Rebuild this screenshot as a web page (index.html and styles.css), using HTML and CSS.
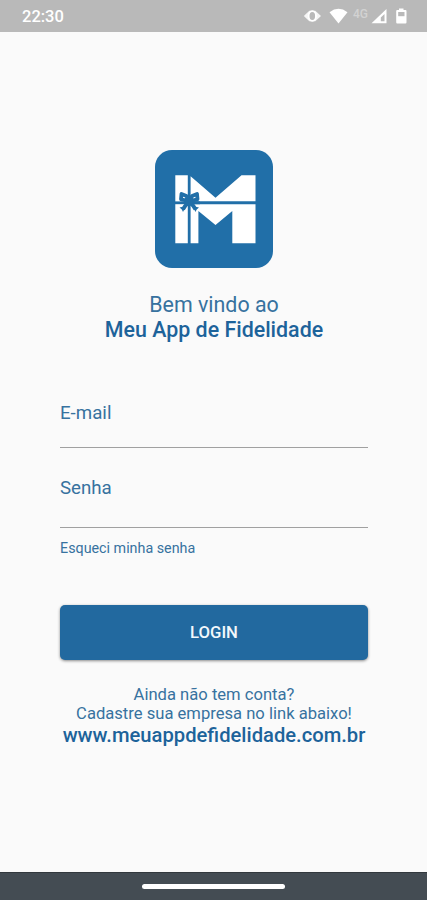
FILE: index.html
```html
<!DOCTYPE html>
<html lang="pt-BR">
<head>
  <meta charset="utf-8">
  <meta name="viewport" content="width=device-width, initial-scale=1">
  <title>Meu App de Fidelidade</title>
  <link rel="stylesheet" href="styles.css">
</head>
<body>
  <div class="status-bar">
    <span class="clock">22:30</span>
    <svg class="status-icons" width="106" height="20" viewBox="0 0 106 20">
      <!-- vibrate -->
      <path d="M1.8 10 L7.3 4.8 H13.3 L19 10 L13.3 15.2 H7.3 Z" fill="#fff" opacity="0.85"/>
      <ellipse cx="10.3" cy="10" rx="3.7" ry="4.8" fill="#b9b9b9" stroke="#fff" stroke-width="1.8"/>
      <!-- wifi -->
      <path d="M27.5 6.2 Q36.5 -0.5 45.5 6.2 L36.5 17.5 Z" fill="#fff"/>
      <text class="network" x="51" y="12">4G</text>
      <!-- signal -->
      <path d="M84.5 3 V17.3 H69.5 Z" fill="#fff"/>
      <path d="M82.5 8 V15.2 H78.8 V11.5 Z" fill="#b9b9b9"/>
      <!-- battery -->
      <path d="M95 4 H97 V2.5 H101.5 V4 H103.5 Q104.5 4 104.5 5 V16.3 Q104.5 17.6 103.5 17.6 H95.2 Q94.2 17.6 94.2 16.3 V5 Q94.2 4 95.2 4 Z" fill="#fff"/>
      <rect x="96.2" y="6" width="6.3" height="4.2" fill="#b9b9b9"/>
    </svg>
  </div>

  <main class="container">
    <svg class="logo" width="118" height="118" viewBox="0 0 118 118">
      <rect width="118" height="118" rx="17" fill="#216fa8"/>
      <g fill="#fff">
        <path d="M20.3 25.2 H32.8 V93.2 H20.3 Z"/>
        <path d="M35.6 26.3 L60.5 47.7 L86.5 25.2 H100.5 V51.3 H35.6 Z"/>
        <path d="M35.6 54.3 H100.5 V93.2 H77.3 V61 L60.5 75 L43.4 61 V93.2 H35.6 Z"/>
      </g>
      <!-- ribbon and bow -->
      <path d="M20 52.8 H45" stroke="#216fa8" stroke-width="2.8"/>
      <g fill="none" stroke="#216fa8" stroke-width="3.8" stroke-linejoin="round">
        <path d="M33.5 51 L31.5 46 L26.5 44 L26 49.3 Z"/>
        <path d="M35 51 L37 46 L42 44 L42.5 49.3 Z"/>
        <path d="M33 53 Q30 55.5 28 59.5"/>
        <path d="M35.5 53 Q38.5 55.5 40.5 59.5"/>
      </g>
      <path d="M24.5 57.5 L31 56 L28 62 L26.8 59.5 Z M44 57.5 L37.5 56 L40.5 62 L41.7 59.5 Z" fill="#216fa8"/>
      <circle cx="34.2" cy="52" r="3.8" fill="#216fa8"/>
    </svg>

    <h1 class="welcome">
      <span>Bem vindo ao</span>
      <strong>Meu App de Fidelidade</strong>
    </h1>

    <form class="login-form">
      <label class="field">
        <span>E-mail</span>
        <input type="email">
      </label>
      <label class="field field-password">
        <span>Senha</span>
        <input type="password">
      </label>
      <a class="forgot">Esqueci minha senha</a>
      <button type="submit">LOGIN</button>
    </form>

    <footer class="signup">
      <p>Ainda não tem conta?</p>
      <p>Cadastre sua empresa no link abaixo!</p>
      <a class="site">www.meuappdefidelidade.com.br</a>
    </footer>
  </main>

  <div class="nav-bar">
    <div class="home-pill"></div>
  </div>
</body>
</html>
```
FILE: styles.css
```css
* {
  box-sizing: border-box;
}

body {
  margin: 0;
  height: 900px;
  display: flex;
  flex-direction: column;
  background-color: #fafafa;
  color: #37729f;
  font-family: Roboto, "Liberation Sans", sans-serif;
  overflow: hidden;
}

.status-bar {
  height: 32px;
  padding: 0 19px 0 22px;
  display: flex;
  justify-content: space-between;
  align-items: center;
  background-color: #b9b9b9;
  color: #fff;
}

.clock {
  font-size: 16.5px;
  font-weight: 500;
}

.network {
  font-size: 12px;
  font-weight: 500;
  fill: #d2d2d2;
}

.container {
  flex: 1;
  padding: 118px 59px 0 60px;
  display: flex;
  flex-direction: column;
}

.logo {
  align-self: center;
}

.welcome {
  margin: 25px 0 0;
  text-align: center;
  font-size: 21.4px;
  font-weight: 400;
  line-height: 24.5px;
}

.welcome span,
.welcome strong {
  display: block;
}

.welcome strong {
  font-weight: 500;
  color: #1d639a;
}

.login-form {
  margin-top: 60px;
  display: flex;
  flex-direction: column;
}

.field {
  height: 46px;
  display: flex;
  flex-direction: column;
  font-size: 18.7px;
  line-height: 22px;
}

.field input {
  flex: 1;
  min-height: 0;
  width: 100%;
  padding: 0;
  border: none;
  border-bottom: 1px solid #a0a0a0;
  outline: none;
  background: transparent;
}

.field-password {
  margin-top: 29px;
  height: 51px;
}

.forgot {
  margin-top: 12px;
  font-size: 14.3px;
  line-height: 17px;
}

button[type="submit"] {
  margin-top: 48px;
  height: 55px;
  border: none;
  border-radius: 5px;
  background-color: #22699f;
  color: #f2f8fc;
  font-family: inherit;
  font-size: 16.7px;
  font-weight: 500;
  box-shadow: 0 1px 3px rgba(0, 0, 0, 0.45);
}

.signup {
  margin-top: 25px;
  text-align: center;
  font-size: 16.6px;
  line-height: 19px;
}

.signup p {
  margin: 0;
}

.site {
  display: block;
  font-size: 20.2px;
  font-weight: 500;
  line-height: 24px;
  color: #1d639a;
}

.nav-bar {
  height: 28px;
  display: flex;
  justify-content: center;
  align-items: center;
  background-color: #444c53;
  border-top: 1px solid #32383d;
}

.home-pill {
  width: 143px;
  height: 5px;
  border-radius: 3px;
  background-color: #fff;
}
```
